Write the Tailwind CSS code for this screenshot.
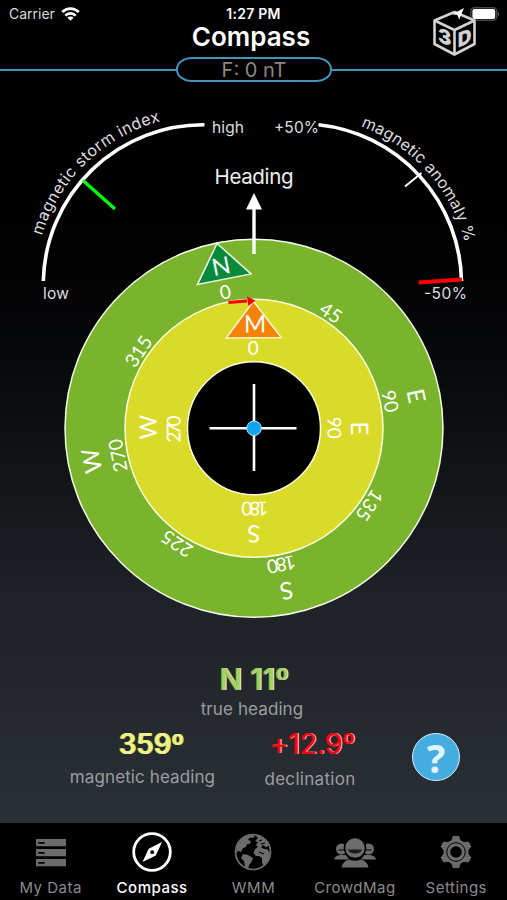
<!DOCTYPE html>
<html lang="en">
<head>
    <meta charset="UTF-8">
    <meta name="viewport" content="width=device-width, initial-scale=1.0">
    <title>Compass</title>
    <script src="https://cdn.jsdelivr.net/npm/@tailwindcss/browser@4"></script>
</head>
<body class="bg-black font-['Inter','Liberation_Sans',sans-serif]">
<div class="w-[507px] h-[900px] overflow-hidden flex flex-col bg-linear-to-b from-black from-8% via-[#1e2126] via-66% to-[#2a3036] to-91%">

    <!-- Status bar and title -->
    <header class="relative h-[57px] shrink-0">
        <div class="grid grid-cols-3 items-center h-[27px] px-[9px] text-white">
            <div class="flex items-center gap-[6px]">
                <span class="text-[14px] leading-none text-[#dcdcdc]">Carrier</span>
                <svg class="w-[19px] h-[14px]" viewBox="0 0 19 14" fill="none" stroke="#fff" stroke-width="2.6">
                    <path d="M1.2 5 A11.8 11.8 0 0 1 17.8 5"/>
                    <path d="M4.3 8.600 A7.3 7.3 0 0 1 14.7 8.600"/>
                    <path d="M9.5 13.8 L6.4 10.8 A4.4 4.4 0 0 1 12.6 10.8 Z" fill="#fff" stroke="none"/>
                </svg>
            </div>
            <div class="text-center text-[14px] leading-none font-semibold tracking-[0.25px]">1:27 PM</div>
            <div class="flex justify-end -mr-[2px]">
                <svg class="w-[30px] h-[14px]" viewBox="0 0 30 14">
                    <rect x="0.8" y="0.8" width="26" height="12.4" rx="3.6" fill="none" stroke="#4a4a4a" stroke-width="1.4"/>
                    <rect x="2.4" y="2" width="22.8" height="10" rx="2" fill="#fff"/>
                    <path d="M28 4.8 Q30 7 28 9.2 Z" fill="#666"/>
                </svg>
            </div>
        </div>
        <h1 class="text-center text-[26px] leading-[19px] font-semibold text-white -ml-[5px]">Compass</h1>
        <svg class="absolute left-[430px] top-[5px] w-[50px] h-[52px]" viewBox="430 5 50 52">
            <g fill="none" stroke="#d2d2d2" stroke-width="2.6" stroke-linejoin="round">
                <path d="M454.5 12 L474.5 20.5 V44 L454.5 54.5 L434.5 44 V20.5 Z"/>
                <path d="M434.5 20.5 L454.5 30 L474.5 20.5 M454.5 30 V54.5"/>
            </g>
            <path d="M464 8 L452 14.5 L457.2 14.8 L459.2 19.5 Z" fill="#fff"/>
            <g font-family="Inter, sans-serif" font-weight="900" font-size="20" fill="#d2d2d2" text-anchor="middle">
                <text transform="matrix(1 .35 0 1 444.800 44.200)">3</text>
                <text transform="matrix(.95 -.4 0 1 464.600 44.800)">D</text>
            </g>
        </svg>
    </header>

    <!-- Total field readout -->
    <div class="flex items-center h-[25px] shrink-0">
        <div class="w-[176px] h-[2px] bg-[#4592bd]"></div>
        <div class="w-[156px] h-[25px] rounded-[16px/12px] border-2 border-[#4592bd] flex items-center justify-center text-[20px] leading-none text-[#8c8680]">F: 0 nT</div>
        <div class="flex-1 h-[2px] bg-[#4592bd]"></div>
    </div>

    <!-- Gauges and dial -->
    <svg class="w-[507px] h-[558px] shrink-0" viewBox="0 82 507 558" font-family="Inter, 'Liberation Sans', sans-serif">
        <defs>
            <path id="stormPath" d="M34.500 285 A169.500 169.500 0 0 1 204 115.500"/>
            <path id="anomalyPath" d="M301 115.500 A169.500 169.500 0 0 1 470.500 285"/>
        </defs>

        <g fill="none" stroke="#fff" stroke-width="3.600">
            <path d="M43.3 281 A160 160 0 0 1 204.500 124.800"/>
            <path d="M318.500 124.800 A160 160 0 0 1 461.500 281"/>
        </g>
        <line x1="83" y1="180.500" x2="115" y2="209" stroke="#00ff0a" stroke-width="3.400"/>
        <line x1="421.500" y1="173" x2="405" y2="186.500" stroke="#fff" stroke-width="2"/>
        <line x1="418.500" y1="282.500" x2="462" y2="279.500" stroke="#f00" stroke-width="4"/>

        <g fill="#dedede" font-size="16">
            <text textLength="172"><textPath href="#stormPath" startOffset="50" textLength="172">magnetic storm index</textPath></text>
            <text textLength="162"><textPath href="#anomalyPath" startOffset="61" textLength="162">magnetic anomaly %</textPath></text>
        </g>
        <g fill="#dedede" font-size="15.500">
            <text x="212" y="133" textLength="32">high</text>
            <text x="274" y="133" textLength="45">+50%</text>
            <text x="43" y="299" textLength="26">low</text>
            <text x="424" y="299" textLength="43">-50%</text>
        </g>
        <text x="254" y="184" text-anchor="middle" font-size="20.500" fill="#efefef" textLength="79">Heading</text>

        <circle cx="254" cy="428.300" r="189" fill="#79b42c" stroke="#f4fbe8" stroke-width="1.500"/>
        <circle cx="254" cy="428.300" r="129" fill="#d9db28" stroke="#fcfde0" stroke-width="1.500"/>
        <circle cx="254" cy="428.300" r="66.500" fill="#000" stroke="#fcfde0" stroke-width="1.500"/>

        <line x1="254" y1="205" x2="254" y2="254" stroke="#fff" stroke-width="3.400"/>
        <path d="M254 193 L262 209.500 H246 Z" fill="#fff"/>

        <!-- true north ring -->
        <g transform="translate(254 428.300) rotate(-11.300)" fill="#fff" font-family="Lato, sans-serif" text-anchor="middle">
            <path d="M0 -188.500 L27.300 -152 H-27.300 Z" fill="#058a3b" stroke="#f0f8e8" stroke-width="1.500"/>
            <g font-size="24">
                <text x="-.5" y="-157">N</text>
                <text y="-157" transform="rotate(90)">E</text>
                <text y="-157" transform="rotate(180)">S</text>
                <text y="-157" transform="rotate(270)">W</text>
            </g>
            <g font-size="19">
                <text x="-1.500" y="-132.500">0</text>
                <text y="-132" transform="rotate(45)">45</text>
                <text y="-132" transform="rotate(90)">90</text>
                <text y="-132" transform="rotate(135)">135</text>
                <text y="-132" transform="rotate(180)" textLength="29">180</text>
                <text y="-132" transform="rotate(225)">225</text>
                <text y="-132" transform="rotate(270)">270</text>
                <text y="-132" transform="rotate(315)">315</text>
            </g>
        </g>

        <!-- magnetic ring -->
        <g transform="translate(254 428.300) rotate(-.5)" fill="#fff" font-family="Lato, sans-serif" text-anchor="middle">
            <path d="M.5 -127 L28 -90.500 H-27 Z" fill="#f58308" stroke="#fdf6d0" stroke-width="1.500"/>
            <g font-size="24">
                <text x="2" y="-96">M</text>
                <text x="1" y="-97" transform="rotate(90)">E</text>
                <text x="1" y="-97" transform="rotate(180)">S</text>
                <text x="2" y="-97" transform="rotate(270)">W</text>
            </g>
            <g font-size="19">
                <text y="-73.500">0</text>
                <text y="-73.500" transform="rotate(90)">90</text>
                <text y="-73.500" transform="rotate(180)" textLength="27">180</text>
                <text y="-73.500" transform="rotate(270)" textLength="27">270</text>
            </g>
        </g>
        <path d="M228.500 302.500 L247 300.800" stroke="#f00" stroke-width="3.200"/>
        <path d="M247 296.500 L255.500 300.500 L248.500 306 Z" fill="#f00"/>

        <path d="M254 384 V471 M209.500 428.300 H296.500" stroke="#fff" stroke-width="2.600"/>
        <circle cx="254" cy="428.300" r="7.300" fill="#12a7ec" stroke="#b9e6fb" stroke-width="1"/>
    </svg>

    <!-- Readings -->
    <section class="relative h-[183px] shrink-0 pt-[23px] text-[#9b9ea1] text-[17px]">
        <div class="flex flex-col items-center text-center">
            <div class="text-[30px] leading-[32px] font-medium text-[#a9d068] [text-shadow:-1px_0_#7fb82c,1px_0_#e2f0cc] ml-[2px]">N 11º</div>
            <div class="leading-[20px] mt-[4px] tracking-[0.1px] -ml-[3px]">true heading</div>
        </div>
        <div class="flex">
            <div class="w-[171px] ml-[57px] mt-[9px] text-center">
                <div class="text-[28px] leading-[32px] font-medium text-[#eff09a] [text-shadow:-1px_0_#cfd522,1px_0_#d8dc50] ml-[18px]">359º</div>
                <div class="leading-[20px] mt-[7px] tracking-[0.1px]">magnetic heading</div>
            </div>
            <div class="w-[120px] ml-[22px] mt-[9px] text-center">
                <div class="text-[29px] leading-[32px] text-[#ee0a14] [text-shadow:1px_0_#f3c7c9,-1px_0_#e0000a] ml-[5px] tracking-[-0.4px]">+12.9º</div>
                <div class="leading-[20px] mt-[9px] tracking-[0.3px]">declination</div>
            </div>
            <div class="ml-[42px] mt-[14px] w-[48px] h-[48px] rounded-full bg-[#45ade2] border-[1.5px] border-[#d8f0fc] flex items-center justify-center font-['Open_Sans','Noto_Sans',sans-serif] text-[39px] leading-none font-bold text-[#e2f4fd]">?</div>
        </div>
    </section>

    <!-- Tab bar -->
    <nav class="grid grid-cols-5 h-[77px] shrink-0 bg-black text-[#8b8b8b] text-[15px] tracking-[0.5px]">
        <div class="flex flex-col items-center pt-[9px]">
            <svg class="w-[40px] h-[40px]" viewBox="0 0 40 40">
                <path d="M5 7 H35 V14.300 H5 Z M5 17 H35 V24.300 H5 Z M5 27 H35 V34.300 H5 Z" fill="#6c6c6c"/>
                <path d="M8 10.800 H13 M8 20.800 H13 M8 30.800 H13" stroke="#000" stroke-width="1.800" stroke-linecap="round"/>
            </svg>
            <span class="leading-[16px] mt-[8px]">My Data</span>
        </div>
        <div class="flex flex-col items-center pt-[9px] text-white font-medium">
            <svg class="w-[40px] h-[40px]" viewBox="0 0 40 40">
                <circle cx="20" cy="20" r="18.300" fill="none" stroke="#fff" stroke-width="2.800"/>
                <path d="M30 10 L23.800 23.500 L10.500 30 L16.700 16.800 Z" fill="#fff"/>
                <circle cx="20.200" cy="20.200" r="1.900" fill="#000"/>
            </svg>
            <span class="leading-[16px] mt-[8px]">Compass</span>
        </div>
        <div class="flex flex-col items-center pt-[9px]">
            <svg class="w-[40px] h-[40px]" viewBox="0 0 40 40" fill="#6c6c6c">
                <circle cx="20" cy="20" r="17.500" fill="none" stroke="#6c6c6c" stroke-width="1.700"/>
                <path d="M4 13 Q9 4 19 2.500 L22 4 L20 6 L17 5.500 L15 8 L18 9 L17 12 L14 12 L13 15 L10 16 L8 20 L5 19 L3 22 Z"/>
                <path d="M10 22 L15 23 L20 26 L18.500 30 L16 33 L15 37 L12 35 L11 29 L8 26 Z"/>
                <path d="M22 3 Q31 4 36 14 L33 15 L30 13 L28 15 L31 17 L34 17 L37 21 Q37 29 31 34 L29 31 L29 26 L26 24 L23 24 L20.500 21 L22 17 L25 15 L23 13 L25 10 L22 9 L25 6 Z"/>
                <path d="M26 9 L29 8 M28 12 L32 11 M26 20 L31 22" stroke="#000" stroke-width="1.200" fill="none"/>
            </svg>
            <span class="leading-[16px] mt-[8px]">WMM</span>
        </div>
        <div class="flex flex-col items-center pt-[9px]">
            <svg class="w-[44px] h-[40px]" viewBox="0 0 44 40" fill="#6c6c6c">
                <circle cx="8.500" cy="17" r="5.500"/>
                <circle cx="35.500" cy="17" r="5.500"/>
                <path d="M1 27.500 Q2 23.500 7 23 H13 L16 27.500 Z M43 27.500 Q42 23.500 37 23 H31 L28 27.500 Z"/>
                <path d="M5.500 18 H11 M33 18 H38.500" stroke="#000" stroke-width="1"/>
                <circle cx="22" cy="16" r="10.500" stroke="#000" stroke-width="1.500"/>
                <path d="M8.500 35.500 Q9.500 29.500 16 27.500 Q22 30 28 27.500 Q34.500 29.500 35.500 35.500 Z"/>
                <path d="M15 17.500 H29 Q28 21.500 22 21.500 Q16 21.500 15 17.500 Z" fill="#1c1c1c"/>
            </svg>
            <span class="leading-[16px] mt-[8px]">CrowdMag</span>
        </div>
        <div class="flex flex-col items-center pt-[9px]">
            <svg class="w-[40px] h-[40px]" viewBox="0 0 40 40">
                <g transform="translate(20 20)" fill="#6c6c6c">
                    <circle r="12.500"/>
                    <path id="tooth" d="M-4.800 -11 L-3 -16 H3 L4.800 -11 Z"/>
                    <use href="#tooth" transform="rotate(60)"/>
                    <use href="#tooth" transform="rotate(120)"/>
                    <use href="#tooth" transform="rotate(180)"/>
                    <use href="#tooth" transform="rotate(240)"/>
                    <use href="#tooth" transform="rotate(300)"/>
                    <circle r="9.300" fill="none" stroke="#000" stroke-width="1"/>
                    <circle r="5.800" fill="#000"/>
                </g>
            </svg>
            <span class="leading-[16px] mt-[8px]">Settings</span>
        </div>
    </nav>
</div>
</body>
</html>
